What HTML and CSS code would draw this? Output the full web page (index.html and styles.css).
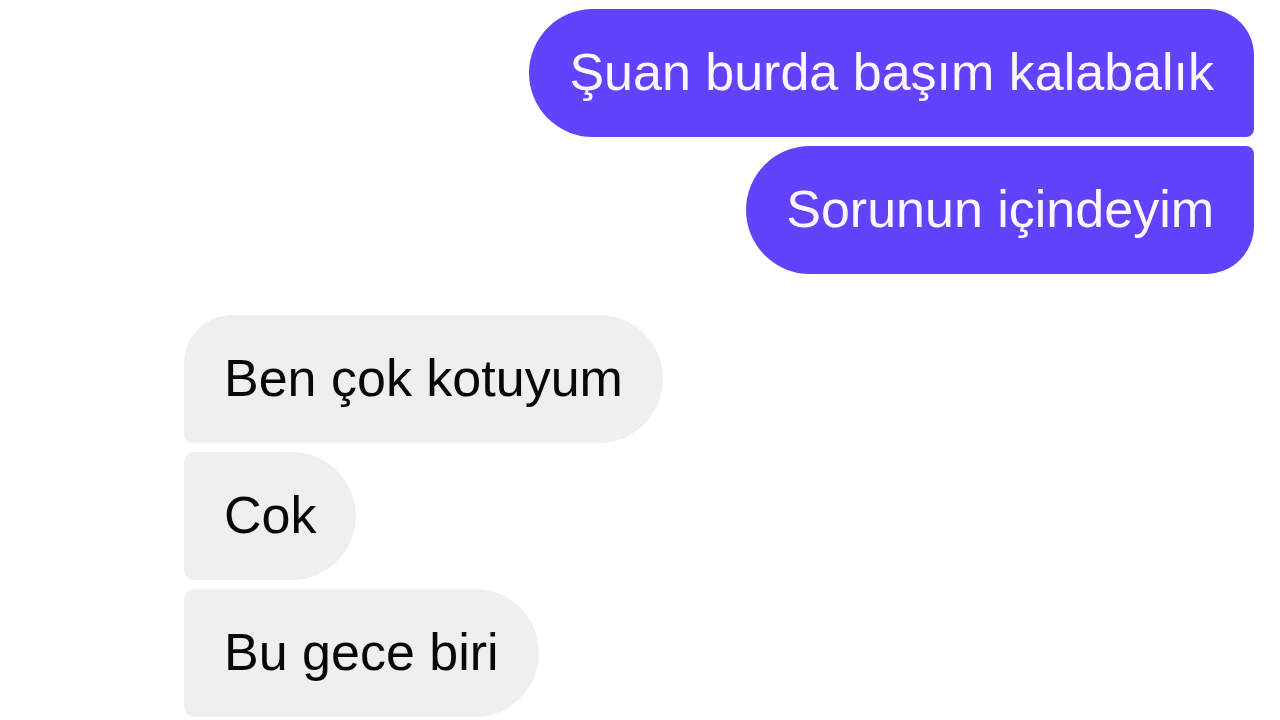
FILE: index.html
```html
<!DOCTYPE html>
<html lang="tr">
<head>
<meta charset="utf-8">
<title>Chat</title>
<link rel="stylesheet" href="styles.css">
</head>
<body>
<main class="chat">
  <section class="group group-out">
    <div class="bubble out first">Şuan burda başım kalabalık</div>
    <div class="bubble out last">Sorunun içindeyim</div>
  </section>
  <section class="group group-in">
    <div class="bubble in first">Ben çok kotuyum</div>
    <div class="bubble in mid">Cok</div>
    <div class="bubble in mid">Bu gece biri</div>
  </section>
</main>
</body>
</html>
```
FILE: styles.css
```css
html, body {
  margin: 0;
  padding: 0;
  background: #ffffff;
}
body {
  width: 1280px;
  height: 720px;
  overflow: hidden;
  font-family: "Liberation Sans", Arial, sans-serif;
}
.chat {
  display: flex;
  flex-direction: column;
  padding: 9px 26px 0 184px;
  gap: 41px;
}
.group {
  display: flex;
  flex-direction: column;
  gap: 9px;
}
.group-out {
  align-items: flex-end;
}
.group-in {
  align-items: flex-start;
}
.bubble {
  height: 128px;
  box-sizing: border-box;
  display: flex;
  align-items: center;
  padding: 0 40px 2px 40px;
  font-size: 52px;
  line-height: 1;
  white-space: nowrap;
}
.out {
  background: #6243fc;
  color: #fbf6fb;
}
.out.first {
  border-radius: 64px 46px 8px 64px;
}
.out.last {
  border-radius: 64px 8px 48px 64px;
}
.in {
  background: #efefef;
  color: #080808;
}
.in.first {
  border-radius: 48px 64px 64px 8px;
}
.in.mid {
  border-radius: 10px 64px 64px 10px;
}
```
